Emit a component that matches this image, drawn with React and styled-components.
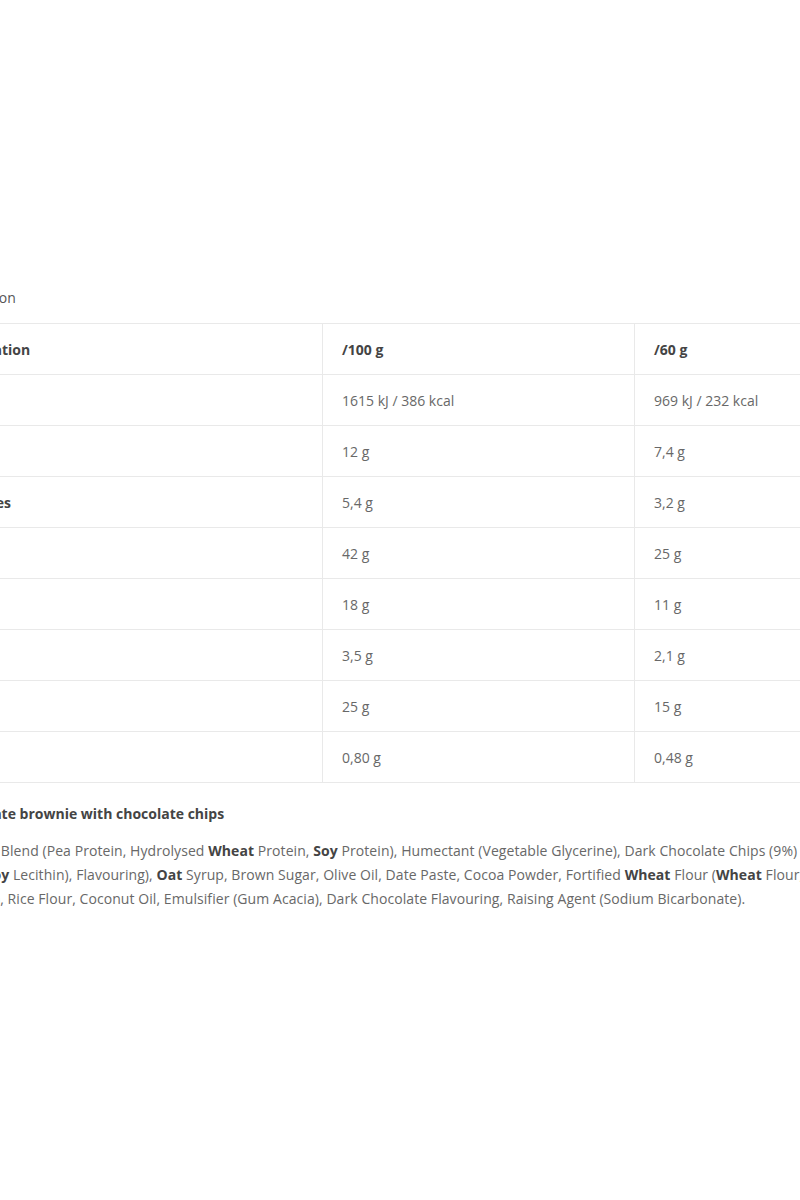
import React from "react";
import styled, { createGlobalStyle } from "styled-components";

const Global = createGlobalStyle`
  html, body { margin: 0; padding: 0; background: #ffffff; }
  body { overflow: hidden; width: 800px; height: 1200px; }
  #root { width: 800px; overflow: hidden; }
`;

const Page = styled.div`
  width: 1100px;
  margin-left: -130px;
  padding-top: 289px;
  font-family: "Open Sans", "Liberation Sans", sans-serif;
  font-size: 14px;
  color: #555;
`;

const Title = styled.div`
  line-height: 18px;
  color: #555;
  padding-left: 6px;
  margin-bottom: 16px;
`;

const Table = styled.div`
  display: grid;
  grid-template-columns: 452px 312px 312px;
  border-top: 1px solid #e9e9e9;
  margin-bottom: 22px;
`;

const Cell = styled.div`
  height: 50px;
  display: flex;
  align-items: center;
  padding: 0 ${(p) => (p.$first ? "11px" : "19px")};
  border-bottom: 1px solid #e9e9e9;
  border-left: ${(p) => (p.$first ? "none" : "1px solid #e9e9e9")};
  font-weight: ${(p) => (p.$bold ? 700 : 400)};
  color: ${(p) => (p.$bold ? "#444" : "#686868")};
  white-space: nowrap;
`;

const SubTitle = styled.div`
  font-weight: 700;
  color: #444;
  line-height: 18px;
  padding-left: 16px;
  margin-bottom: 16px;
`;

const Ingredients = styled.div`
  line-height: 24px;
  letter-spacing: 0.07px;
  white-space: nowrap;
  color: #686868;
  b { color: #444; font-weight: 700; }
`;

const Line = styled.div`
  margin-left: ${(p) => p.$shift || 0}px;
`;

const rows = [
  ["Energy value", "1615 kJ / 386 kcal", "969 kJ / 232 kcal"],
  ["Fat", "12 g", "7,4 g"],
  ["of which saturates", "5,4 g", "3,2 g", true],
  ["Carbohydrate", "42 g", "25 g"],
  ["of which sugars", "18 g", "11 g"],
  ["Fibre", "3,5 g", "2,1 g"],
  ["Protein", "25 g", "15 g"],
  ["Salt", "0,80 g", "0,48 g"],
];

export default function App() {
  return (
    <>
      <Global />
      <Page>
        <Title>Nutrition information</Title>
        <Table>
          <Cell $first $bold>Nutrition declaration</Cell>
          <Cell $bold>/100 g</Cell>
          <Cell $bold>/60 g</Cell>
          {rows.map(([label, a, b, bold]) => (
            <React.Fragment key={label}>
              <Cell $first $bold={!!bold}>{label}</Cell>
              <Cell>{a}</Cell>
              <Cell>{b}</Cell>
            </React.Fragment>
          ))}
        </Table>
        <SubTitle>Flavour: Chocolate brownie with chocolate chips</SubTitle>
        <Ingredients>
          <Line $shift={-3}>
            Ingredients: Protein Blend (Pea Protein, Hydrolysed <b>Wheat</b> Protein, <b>Soy</b> Protein), Humectant (Vegetable Glycerine), Dark Chocolate Chips (9%) (Cocoa Mass, Cocoa Butter,
          </Line>
          <Line $shift={-4}>
            Sugar, Emulsifier (<b>Soy</b> Lecithin), Flavouring), <b>Oat</b> Syrup, Brown Sugar, Olive Oil, Date Paste, Cocoa Powder, Fortified <b>Wheat</b> Flour (<b>Wheat</b> Flour, Calcium,
          </Line>
          <Line $shift={-10}>
            Iron, Niacin, Thiamin), Rice Flour, Coconut Oil, Emulsifier (Gum Acacia), Dark Chocolate Flavouring, Raising Agent (Sodium Bicarbonate).
          </Line>
        </Ingredients>
      </Page>
    </>
  );
}
